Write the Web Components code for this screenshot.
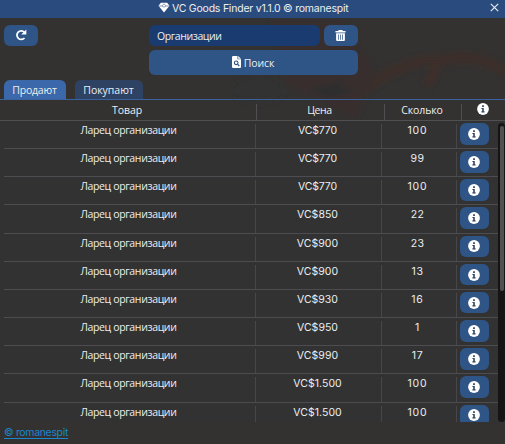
<!DOCTYPE html>
<html lang="ru">
<head>
<meta charset="utf-8">
<title>VC Goods Finder</title>
<style>
html,body{margin:0;height:100%;overflow:hidden;background:#333231}
body{font:500 10.5px/16px "Open Sans","Noto Sans",sans-serif;color:#eceef0}
</style>
</head>
<body>
<vc-app></vc-app>
<script>
const ICONS = {
  gem: '<svg viewBox="0 0 12 12"><path fill="#fff" d="M2.6.8h6.8L12 4.2 6 11.5 0 4.2z"/><path fill="none" stroke="#2b4c7e" stroke-width=".6" d="M.6 4.300h3L6 2l2.400 2.300h3M3.600 4.300 6 5.600l2.400-1.300"/></svg>',
  refresh: '<svg viewBox="0 0 12 12"><path fill="none" stroke="#fff" stroke-width="1.800" d="M9.300 3.100A4.300 4.300 0 1 0 9.500 9"/><path fill="#fff" d="M11.300.4v5.200H6.200z"/></svg>',
  trash: '<svg viewBox="0 0 12 13"><path fill="#fff" fill-rule="evenodd" d="M4 .5h4l.6 1H11.500v1.700H.5V1.500h2.900zM1.200 4h9.600v7.300q0 1.200-1.200 1.200H2.400q-1.200 0-1.200-1.200zM3.300 5.400v5.600h.8V5.400zm2.300 0v5.600h.8V5.400zm2.300 0v5.600h.8V5.400z"/></svg>',
  doc: '<svg viewBox="0 0 9 12"><path fill="#fff" d="M1.200 0H5.500v3.300H9V11q0 1-1 1H1q-1 0-1-1V1.200Q0 0 1.200 0zM6.200 0 9 2.700H6.200z"/><circle cx="4.200" cy="6.800" r="1.800" fill="none" stroke="#2f5486" stroke-width="1.100"/><path stroke="#2f5486" stroke-width="1.200" d="m5.500 8.100 1.800 1.900"/></svg>',
  info: '<svg viewBox="0 0 12 12"><circle cx="6" cy="6" r="5.900" fill="#fff"/><path fill="#31465f" d="M5.100 2.300h1.800v1.600H5.100zM4.400 4.900h2.400v3.400h.8v1.200H4.400V8.300h.8V6.100h-.8z"/></svg>',
  close: '<svg viewBox="0 0 9 9"><path stroke="#e6ebf2" stroke-width="1.200" d="m.8.8 7.400 7.400M8.200.8.8 8.200"/></svg>'
};

function define(name, markup, setup) {
  const tpl = document.createElement('template');
  tpl.innerHTML = markup;
  customElements.define(name, class extends HTMLElement {
    connectedCallback() {
      if (this.shadowRoot) return;
      this.attachShadow({mode: 'open'}).append(tpl.content.cloneNode(true));
      if (setup) setup(this, this.shadowRoot);
    }
  });
}

/* Text whose tracking is adjusted so that it spans the width in "fit". */
define('vc-label', '<style>:host{display:inline-block;white-space:nowrap}span{display:inline-block}.latin{font-family:Inter,sans-serif;font-weight:400}</style><span></span>', (host, root) => {
  const span = root.querySelector('span');
  const text = host.getAttribute('text'), fit = +host.getAttribute('fit');
  span.textContent = text;
  if (!/[а-я]/i.test(text)) span.className = 'latin';
  const w = span.getBoundingClientRect().width;
  if (w && fit) {
    const s = (fit - w) / text.length;
    span.style.letterSpacing = s.toFixed(3) + 'px';
  }
});

define('vc-icon', '<style>:host{display:inline-flex;flex:none}svg{width:100%;height:100%;display:block}</style><span style="display:contents"></span>', (host, root) => {
  root.querySelector('span').innerHTML = ICONS[host.getAttribute('name')];
});

define('vc-button', '<style>:host{display:flex;align-items:center;justify-content:center;gap:3px;box-sizing:border-box;background:#2f5486;border-radius:6px}</style><slot></slot>');

define('vc-titlebar', `<style>
:host{display:flex;align-items:center;justify-content:space-between;height:18px;background:#2a4b7d;padding:0 6px 0 158px;box-sizing:border-box}
div{display:flex;align-items:center;gap:2px;height:16px;margin-bottom:2px}
.gem{width:12px;height:11px;margin-bottom:1px}.x{width:9px;height:9px;margin-bottom:3px}
</style><div><vc-icon class="gem" name="gem"></vc-icon><vc-label text="VC Goods Finder v1.1.0 © romanespit" fit="176.500"></vc-label></div><vc-icon class="x" name="close"></vc-icon>`);

define('vc-toolbar', `<style>
:host{display:flex;gap:111px;padding:7px 0 0 4px;height:62px;box-sizing:border-box}
.right{display:grid;grid-template-columns:171px 34px;column-gap:4px;row-gap:4px;grid-template-rows:21px 25px}
.field{background:#193b70;border-radius:6px;padding-left:8px;display:flex;align-items:center;height:21px;box-sizing:border-box}
.wide{grid-column:1/3}
.refresh{width:34px;height:21px}
.r{width:12px;height:12px;margin-bottom:1px}.t{width:11px;height:13px;margin:0 2px 1px 0}.d{width:9px;height:12px;margin-bottom:1px}
.wide vc-label{margin-right:1px}
</style><vc-button class="refresh"><vc-icon class="r" name="refresh"></vc-icon></vc-button>
<div class="right"><div class="field"><vc-label text="Организации" fit="64.500"></vc-label></div>
<vc-button><vc-icon class="t" name="trash"></vc-icon></vc-button>
<vc-button class="wide"><vc-icon class="d" name="doc"></vc-icon><vc-label text="Поиск" fit="30.500"></vc-label></vc-button></div>`);

define('vc-tabs', `<style>
:host{display:flex;gap:9px;height:20px;box-sizing:border-box;padding:0 4px;border-bottom:1px solid #3a62a0}
div{display:flex;align-items:center;justify-content:center;background:#2e4364;border-radius:6px 6px 0 0;width:68px;padding-right:1px;box-sizing:border-box}
.on{background:#3b68aa;width:62px}
</style><div class="on"><vc-label text="Продают" fit="44.500"></vc-label></div><div><vc-label text="Покупают" fit="50.500"></vc-label></div>`);

define('vc-header', `<style>
:host{display:grid;grid-template-columns:256px 128px 77px 44px;height:21px;box-sizing:border-box;border-bottom:1px solid #505052}
div{display:flex;justify-content:center;align-items:flex-start;box-sizing:border-box;line-height:16px;padding:2px 2px 0 0}
div+div{border-left:1px solid #505052;margin-top:4px;padding-top:0}
div+div vc-label{margin-top:-2px}
.info vc-icon{margin-top:-1px}
vc-icon{width:12px;height:12px}
</style><div class="first"><vc-label text="Товар" fit="30"></vc-label></div><div><vc-label text="Цена" fit="24.500"></vc-label></div><div><vc-label text="Сколько" fit="41.500"></vc-label></div><div class="info"><vc-icon name="info"></vc-icon></div>`);

define('vc-row', `<style>
:host{display:grid;grid-template-columns:251px 126px 75px 42px;height:28.170px;box-sizing:border-box;border-bottom:1px solid #4d4d51;background:#323232}
div{display:flex;justify-content:center;align-items:flex-start;box-sizing:border-box;padding:1px 2px 0 0}
div+div{border-left:1px solid #47474b;margin-top:3px;padding-top:0}
.price vc-label,.count vc-label{margin-top:-2px}
.count{padding-right:3px}
.act{justify-content:flex-start;padding:0 0 0 3px}
vc-button{width:29px;height:21.500px;margin-top:-1px}
vc-icon{width:12px;height:12px;margin-right:1px}
</style><div><vc-label text="Ларец организации" fit="96"></vc-label></div><div class="price"></div><div class="count"></div><div class="act"><vc-button><vc-icon name="info"></vc-icon></vc-button></div>`, (host, root) => {
  const put = (sel, attr, fit) => {
    const l = document.createElement('vc-label');
    l.setAttribute('text', host.getAttribute(attr));
    l.setAttribute('fit', host.getAttribute(fit));
    root.querySelector(sel).append(l);
  };
  put('.price', 'price', 'pw');
  put('.count', 'count', 'cw');
});

define('vc-list', `<style>
:host{display:grid;grid-template-columns:494px 7px;height:301px;overflow:hidden;padding-left:4px;box-sizing:border-box;background:#323232}
.rows{height:301px;overflow:hidden}
.bar{background:#151515;border-radius:4px;margin-top:2px;height:299px;padding:3px 1px 0 2px;box-sizing:border-box}
.bar i{display:block;width:4px;height:165px;background:#515151;border-radius:3px}
</style><div class="rows"></div><div class="bar"><i></i></div>`, (host, root) => {
  const data = [['VC$770',39,'100',20],['VC$770',39,'99',14],['VC$770',39,'100',20],['VC$850',41,'22',13.5],['VC$900',41.5,'23',13.5],['VC$900',41.5,'13',12],['VC$930',41,'16',12.5],['VC$950',41,'1',5],['VC$990',41.5,'17',11.5],['VC$1.500',48.5,'100',20],['VC$1.500',48.5,'100',20]];
  root.querySelector('.rows').innerHTML = data.map(([p,pw,c,cw]) => `<vc-row price="${p}" pw="${pw}" count="${c}" cw="${cw}"></vc-row>`).join('');
});

define('vc-footer', `<style>
:host{display:flex;padding:3px 4px 0;height:22px;box-sizing:border-box}
a{color:#1b86cc;text-decoration:none;border-bottom:1px solid #1b86cc;height:13px;line-height:14px}
vc-label{line-height:14px}
</style><a><vc-label text="© romanespit" fit="64"></vc-label></a>`);

/* Dimmed game scene that shows through the translucent window. */
define('vc-backdrop', `<style>:host{position:absolute;inset:0;z-index:-1}svg{display:block}</style>
<svg width="505" height="444"><defs><filter id="b"><feGaussianBlur stdDeviation="2"/></filter></defs><rect width="505" height="444" fill="#333231"/>
<g filter="url(#b)"><path d="M350 98Q410 55 440 61Q475 51 505 72" fill="none" stroke="#3b2e2c" stroke-width="12"/><path d="M437 62q-3 13-10 24" fill="none" stroke="#3d2e2b" stroke-width="10"/><path d="M270 20h70l35 50-18 50-72-36z" fill="#372f2e"/><ellipse cx="258" cy="91" rx="26" ry="13" fill="#303030"/><path d="M310 89l25-5 8-6-3 9 15 3-27 8z" fill="#2e2d2d"/></g></svg>`);

define('vc-app', `<style>
:host{display:flex;flex-direction:column;width:505px;height:444px;overflow:hidden;position:relative;z-index:0}
</style><vc-backdrop></vc-backdrop><vc-titlebar></vc-titlebar><vc-toolbar></vc-toolbar><vc-tabs></vc-tabs><vc-header></vc-header><vc-list></vc-list><vc-footer></vc-footer>`);
</script>
</body>
</html>
